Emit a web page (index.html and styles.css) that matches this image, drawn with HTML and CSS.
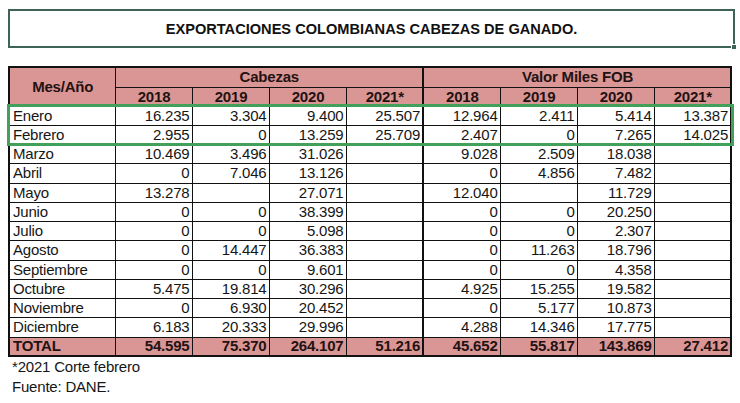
FILE: index.html
```html
<!DOCTYPE html>
<html lang="es">
<head>
<meta charset="utf-8">
<title>Exportaciones colombianas cabezas de ganado</title>
<link rel="stylesheet" href="styles.css">
</head>
<body>
<div class="page">
  <div class="title-box">
    <h1 class="title">EXPORTACIONES COLOMBIANAS CABEZAS DE GANADO.</h1>
    <span class="handle"></span>
  </div>

  <div class="table-wrap">
    <table class="data">
      <colgroup>
        <col class="c-mes">
        <col class="c-num"><col class="c-num"><col class="c-num"><col class="c-num sep">
        <col class="c-num"><col class="c-num"><col class="c-num"><col class="c-num">
      </colgroup>
      <thead>
        <tr class="h1">
          <th rowspan="2" class="mes-h">Mes/Año</th>
          <th colspan="4" class="grp sep">Cabezas</th>
          <th colspan="4" class="grp">Valor Miles FOB</th>
        </tr>
        <tr class="h2">
          <th>2018</th><th>2019</th><th>2020</th><th class="sep">2021*</th>
          <th>2018</th><th>2019</th><th>2020</th><th>2021*</th>
        </tr>
      </thead>
      <tbody>
        <tr><td class="m">Enero</td><td>16.235</td><td>3.304</td><td>9.400</td><td class="sep">25.507</td><td>12.964</td><td>2.411</td><td>5.414</td><td>13.387</td></tr>
        <tr><td class="m">Febrero</td><td>2.955</td><td>0</td><td>13.259</td><td class="sep">25.709</td><td>2.407</td><td>0</td><td>7.265</td><td>14.025</td></tr>
        <tr><td class="m">Marzo</td><td>10.469</td><td>3.496</td><td>31.026</td><td class="sep"></td><td>9.028</td><td>2.509</td><td>18.038</td><td></td></tr>
        <tr><td class="m">Abril</td><td>0</td><td>7.046</td><td>13.126</td><td class="sep"></td><td>0</td><td>4.856</td><td>7.482</td><td></td></tr>
        <tr><td class="m">Mayo</td><td>13.278</td><td></td><td>27.071</td><td class="sep"></td><td>12.040</td><td></td><td>11.729</td><td></td></tr>
        <tr><td class="m">Junio</td><td>0</td><td>0</td><td>38.399</td><td class="sep"></td><td>0</td><td>0</td><td>20.250</td><td></td></tr>
        <tr><td class="m">Julio</td><td>0</td><td>0</td><td>5.098</td><td class="sep"></td><td>0</td><td>0</td><td>2.307</td><td></td></tr>
        <tr><td class="m">Agosto</td><td>0</td><td>14.447</td><td>36.383</td><td class="sep"></td><td>0</td><td>11.263</td><td>18.796</td><td></td></tr>
        <tr><td class="m">Septiembre</td><td>0</td><td>0</td><td>9.601</td><td class="sep"></td><td>0</td><td>0</td><td>4.358</td><td></td></tr>
        <tr><td class="m">Octubre</td><td>5.475</td><td>19.814</td><td>30.296</td><td class="sep"></td><td>4.925</td><td>15.255</td><td>19.582</td><td></td></tr>
        <tr><td class="m">Noviembre</td><td>0</td><td>6.930</td><td>20.452</td><td class="sep"></td><td>0</td><td>5.177</td><td>10.873</td><td></td></tr>
        <tr><td class="m">Diciembre</td><td>6.183</td><td>20.333</td><td>29.996</td><td class="sep"></td><td>4.288</td><td>14.346</td><td>17.775</td><td></td></tr>
        <tr class="total"><td class="m">TOTAL</td><td>54.595</td><td>75.370</td><td>264.107</td><td class="sep">51.216</td><td>45.652</td><td>55.817</td><td>143.869</td><td>27.412</td></tr>
      </tbody>
    </table>
    <div class="selection"></div>
  </div>

  <p class="note">*2021 Corte febrero</p>
  <p class="note">Fuente: DANE.</p>
</div>
</body>
</html>
```

FILE: styles.css
```css
* { box-sizing: border-box; }

html, body {
  margin: 0;
  padding: 0;
  background: #ffffff;
}

body {
  font-family: "Liberation Sans", Arial, sans-serif;
  font-size: 15px;
  letter-spacing: -0.2px;
  color: #161616;
}

.page {
  padding: 9px 0 0 8px;
}

.title-box {
  position: relative;
  width: 727px;
  height: 39px;
  border: 2px solid #3e6457;
  display: flex;
  align-items: center;
  justify-content: center;
}

.title {
  margin: 0;
  font-size: 14.6px;
  letter-spacing: 0;
  font-weight: bold;
  color: #111;
}

.handle {
  position: absolute;
  right: -4px;
  bottom: -4px;
  width: 6px;
  height: 6px;
  background: #3e6457;
  border: 1px solid #ffffff;
}

.table-wrap {
  position: relative;
  width: 724px;
  margin-top: 18px;
}

.data {
  border-collapse: collapse;
  table-layout: fixed;
  width: 724px;
  border: 2px solid #111;
}

.c-mes { width: 106px; }
.c-num { width: 77px; }

.data th,
.data td {
  border: 1px solid #111;
  padding: 0 2px 0 3px;
  line-height: 16px;
  white-space: nowrap;
  overflow: hidden;
}

.data th.sep,
.data td.sep {
  border-right: 2px solid #111;
}

.data thead th {
  background: #da9694;
  font-weight: bold;
  text-align: center;
  color: #241212;
}

.data thead .h1 { height: 20px; }
.data thead .h2 { height: 19px; }

.data tbody tr { height: 19.25px; }

.data td {
  text-align: right;
}

.data td.m {
  text-align: left;
}

.data tr.total td {
  background: #da9694;
  font-weight: bold;
  color: #241212;
  border-top: 1.5px solid #111;
  border-bottom: 2px solid #111;
}

.selection {
  position: absolute;
  left: -1px;
  top: 38px;
  width: 727px;
  height: 42px;
  border: 3px solid #43a05a;
  pointer-events: none;
}

.note {
  margin: 0;
  height: 19.5px;
  line-height: 19.5px;
  padding-left: 4px;
  color: #161616;
}
```
